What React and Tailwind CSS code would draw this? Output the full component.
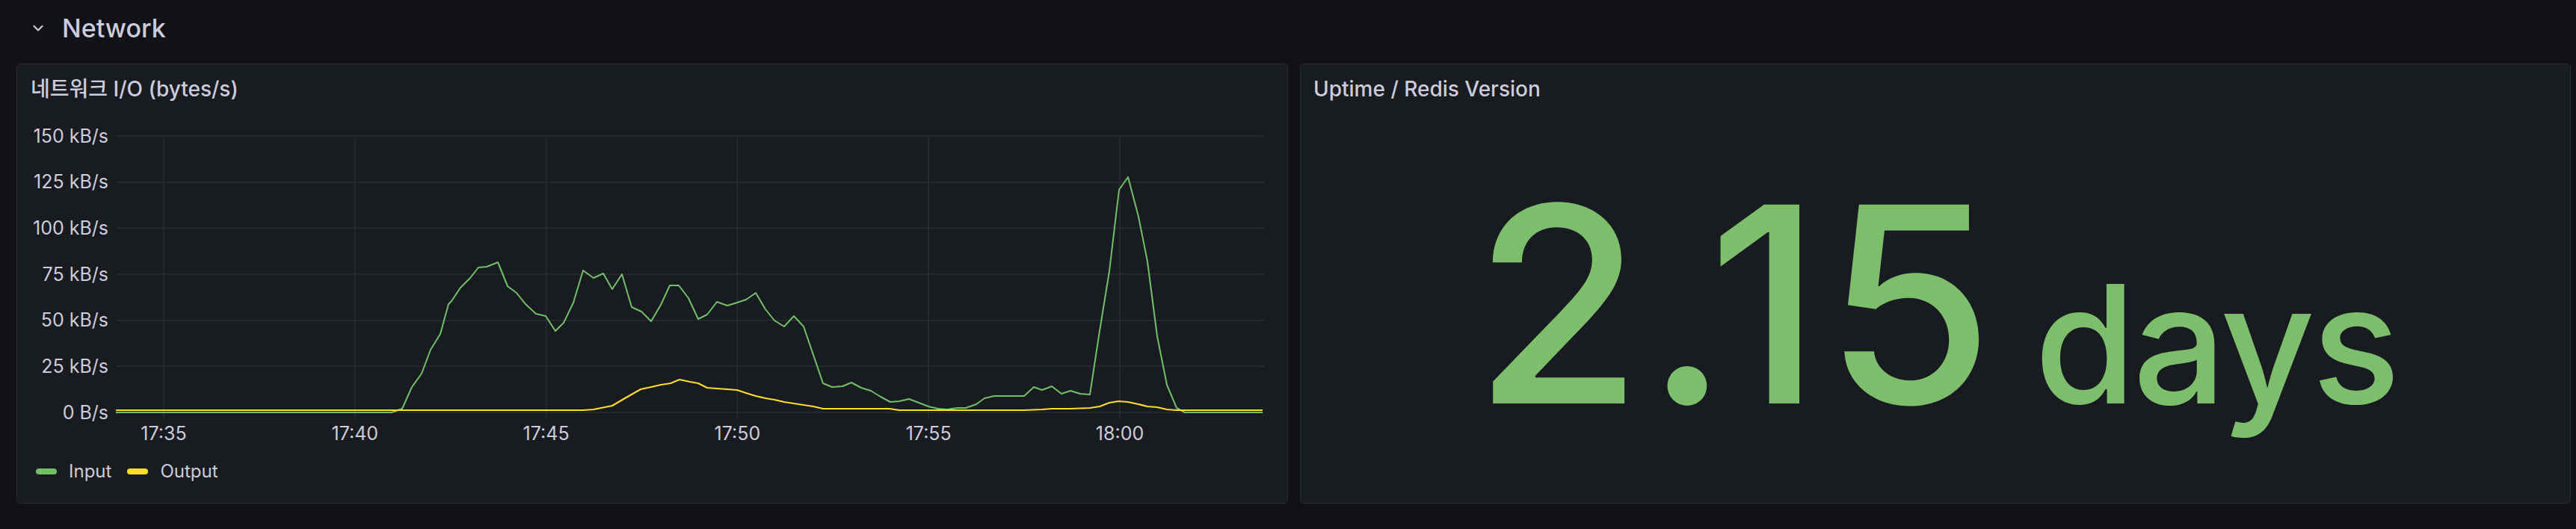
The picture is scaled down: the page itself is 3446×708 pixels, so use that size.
import React from 'react'

// plot geometry in page pixels (svg origin sits at page x 23, y 151)
const OX = 23
const OY = 151
const PLOT_L = 156
const PLOT_R = 1691
const Y0 = 552
const Y150 = 182

const yTicks = ['150 kB/s', '125 kB/s', '100 kB/s', '75 kB/s', '50 kB/s', '25 kB/s', '0 B/s']
const xTicks = ['17:35', '17:40', '17:45', '17:50', '17:55', '18:00']

const input = [
  [155, 552], [524, 552], [538, 547], [551, 518], [564, 500], [576, 468], [589, 447], [600, 407],
  [604, 403], [616, 385], [629, 372], [640, 358], [651, 357], [666, 351], [679, 383], [691, 392],
  [703, 407], [717, 420], [730, 423], [743, 443], [754, 432], [767, 405], [780, 362], [794, 372],
  [807, 366], [819, 387], [832, 367], [845, 411], [858, 417], [871, 430], [884, 408], [896, 382],
  [908, 382], [921, 399], [934, 427], [946, 421], [959, 404], [973, 409], [986, 405], [998, 401],
  [1011, 392], [1024, 414], [1036, 429], [1049, 437], [1062, 423], [1075, 437], [1088, 475],
  [1101, 513], [1113, 518], [1127, 517], [1139, 512], [1152, 519], [1165, 523], [1178, 531],
  [1191, 538], [1203, 537], [1216, 534], [1229, 539], [1242, 544], [1255, 547], [1267, 548],
  [1281, 546], [1292, 546], [1306, 541], [1317, 533], [1330, 530], [1370, 530], [1383, 518],
  [1394, 522], [1407, 517], [1420, 527], [1432, 523], [1445, 527], [1458, 528], [1471, 443],
  [1484, 363], [1497, 254], [1509, 237], [1523, 290], [1535, 350], [1548, 450], [1561, 515],
  [1574, 546], [1585, 552], [1689, 552],
]

const output = [
  [155, 549], [780, 549], [794, 548], [819, 543], [836, 533], [857, 521], [871, 518], [884, 515],
  [897, 513], [909, 508], [923, 511], [934, 513], [946, 519], [959, 520], [973, 521], [986, 522],
  [998, 526], [1011, 530], [1024, 533], [1036, 535], [1049, 538], [1062, 540], [1075, 542],
  [1088, 544], [1101, 547], [1113, 547], [1190, 547], [1203, 549], [1370, 549], [1394, 548],
  [1407, 547], [1420, 547], [1432, 547], [1458, 546], [1471, 544], [1484, 539], [1496, 537],
  [1509, 538], [1523, 541], [1535, 544], [1548, 545], [1561, 548], [1574, 549], [1689, 549],
]

const toPoints = (pts) => pts.map(([x, y]) => `${x - OX},${y - OY}`).join(' ')

function Chart() {
  const step = (Y0 - Y150) / 6
  return (
    <svg width="1699" height="449" className="block">
      {yTicks.map((label, i) => {
        const y = Y150 + step * i - OY
        return (
          <g key={label}>
            <line x1={PLOT_L - OX} x2={PLOT_R - OX} y1={y} y2={y} stroke="#2a2c31" strokeWidth="1.5" />
            <text x={145 - OX} y={y + 8.5} textAnchor="end" fill="#ccccdc" fontSize="25">
              {label}
            </text>
          </g>
        )
      })}
      {xTicks.map((label, i) => {
        const x = 219 + 255.8 * i - OX
        return (
          <g key={label}>
            <line x1={x} x2={x} y1={Y150 - OY} y2={560 - OY} stroke="#2a2c31" strokeWidth="1.5" />
            <text x={x} y={589 - OY} textAnchor="middle" fill="#ccccdc" fontSize="25">
              {label}
            </text>
          </g>
        )
      })}
      <polyline points={toPoints(input)} fill="none" stroke="#73bf69" strokeWidth="2" strokeLinejoin="round" />
      <polyline points={toPoints(output)} fill="none" stroke="#fade2a" strokeWidth="2.2" strokeLinejoin="round" />
    </svg>
  )
}

function LegendItem({ color, label }) {
  return (
    <div className="flex items-center gap-[16px]">
      <span className={`block w-[28px] h-[8px] rounded-full ${color}`}></span>
      <span className="text-[24px] leading-none">{label}</span>
    </div>
  )
}

export default function App() {
  return (
    <div className="w-[3446px] h-[708px] bg-[#111217] text-[#ccccdc] font-['Inter','Noto_Sans_CJK_KR',sans-serif] overflow-hidden">
      <div className="h-[76px] flex items-center pl-[44px] gap-[25px]">
        <svg width="14" height="10" viewBox="0 0 14 10">
          <polyline points="1.5,2 7,7.5 12.5,2" fill="none" stroke="#ccccdc" strokeWidth="2.2" strokeLinecap="round" strokeLinejoin="round" />
        </svg>
        <span className="text-[34px] font-medium leading-none">Network</span>
      </div>

      <div className="flex gap-[16px] pl-[22px] pr-[7px] pt-[9px]">
        <div className="w-[1701px] h-[589px] flex flex-col bg-[#181b1f] border border-[#2a2c31] rounded-[6px]">
          <div className="h-[65px] flex items-center px-[18px]">
            <span className="text-[28px] font-medium leading-none">네트워크 I/O (bytes/s)</span>
          </div>
          <Chart />
          <div className="h-[62px] flex items-center gap-[21px] pl-[25px]">
            <LegendItem color="bg-[#73bf69]" label="Input" />
            <LegendItem color="bg-[#fade2a]" label="Output" />
          </div>
        </div>

        <div className="flex-1 h-[589px] flex flex-col bg-[#181b1f] border border-[#2a2c31] rounded-[6px]">
          <div className="h-[65px] flex items-center px-[17px]">
            <span className="text-[28px] font-medium leading-none">Uptime / Redis Version</span>
          </div>
          <div className="flex-1 flex items-center justify-center pb-[10px]">
            <div className="flex items-baseline text-[#7dbe6d] font-medium leading-none">
              <span className="text-[366px] tracking-[0.012em]">2.15</span>
              <span className="text-[220px] ml-[50px] tracking-[-0.02em]">days</span>
            </div>
          </div>
        </div>
      </div>
    </div>
  )
}
